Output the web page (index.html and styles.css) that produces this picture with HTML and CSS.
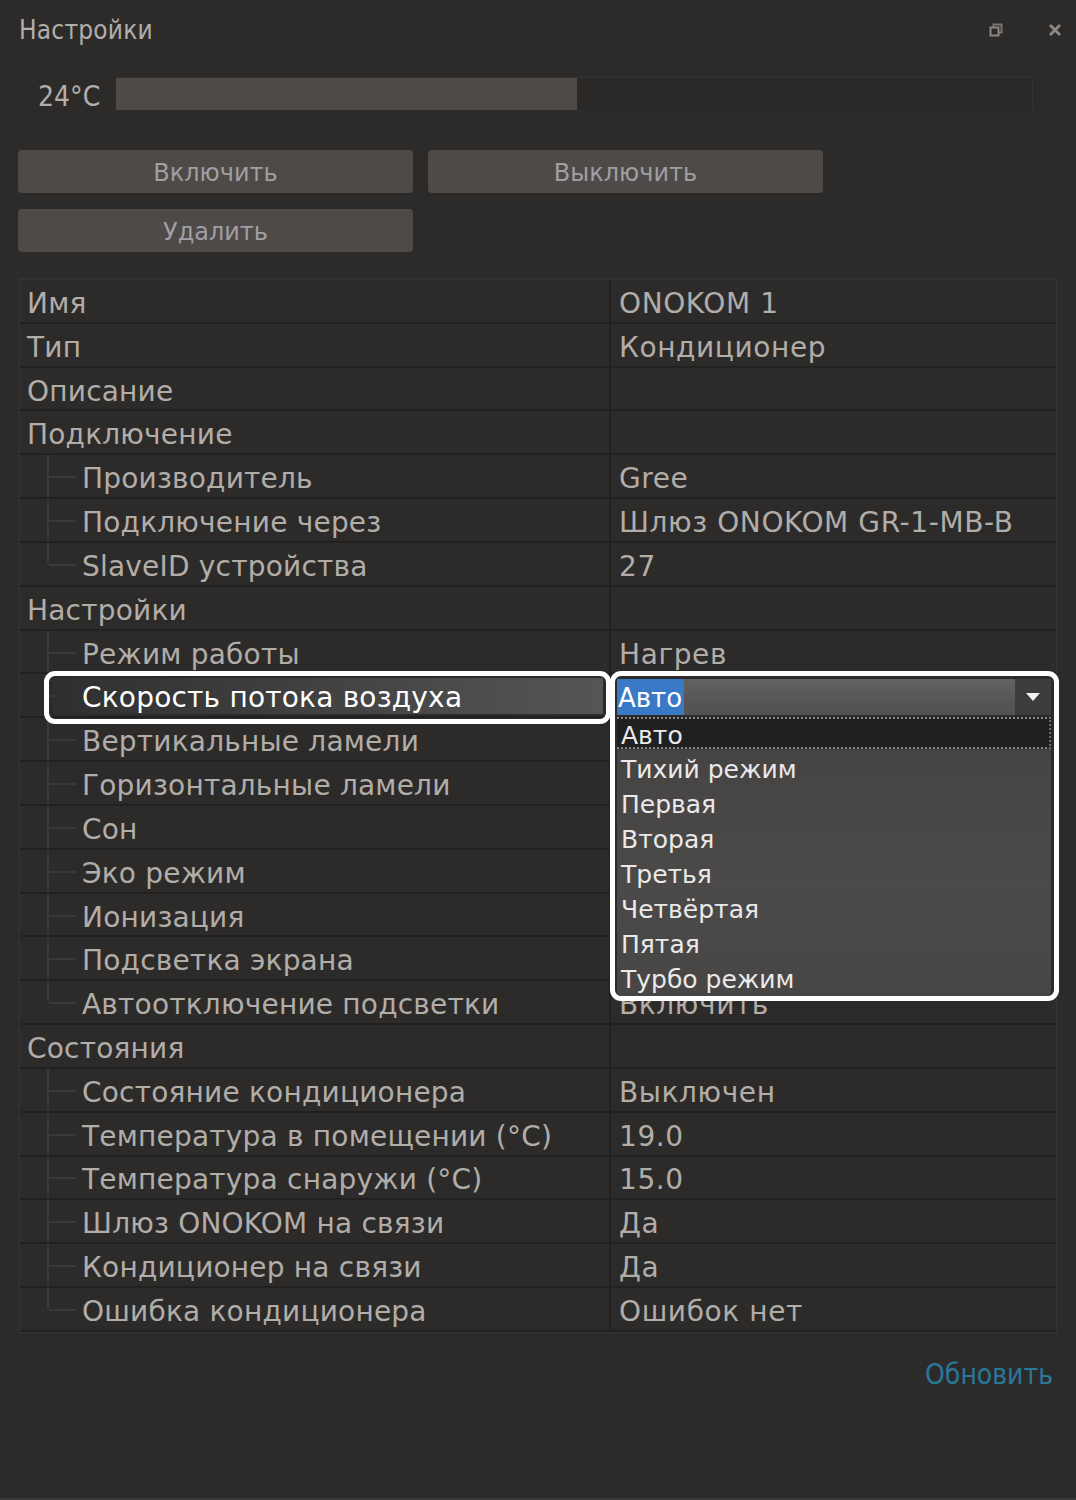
FILE: index.html
```html
<!DOCTYPE html>
<html lang="ru">
<head>
<meta charset="utf-8">
<title>Настройки</title>
<link rel="stylesheet" href="styles.css">
</head>
<body>
<div class="panel">
  <header class="titlebar">
    <span class="title">Настройки</span>
    <div class="win-icons">
      <svg class="ico-restore" width="14" height="14" viewBox="0 0 14 14">
        <rect x="4.5" y="1.5" width="8" height="8" fill="none" stroke="#7a7674" stroke-width="2"/>
        <rect x="1.5" y="4.5" width="8" height="8" fill="#2d2b29" stroke="#8a8684" stroke-width="2"/>
      </svg>
      <svg class="ico-close" width="14" height="14" viewBox="0 0 14 14">
        <path d="M2 2 L12 12 M12 2 L2 12" stroke="#8e8a88" stroke-width="2.8"/>
      </svg>
    </div>
  </header>

  <div class="temp-row">
    <span class="temp-label">24°C</span>
    <div class="bar"><div class="bar-fill" style="width:50.3%"></div></div>
  </div>

  <div class="buttons">
    <button class="btn">Включить</button>
    <button class="btn">Выключить</button>
    <button class="btn">Удалить</button>
  </div>

  <div class="table">
    <div class="row"><div class="cell key">Имя</div><div class="cell val">ONOKOM 1</div></div>
    <div class="row"><div class="cell key">Тип</div><div class="cell val">Кондиционер</div></div>
    <div class="row"><div class="cell key">Описание</div><div class="cell val"></div></div>
    <div class="row"><div class="cell key">Подключение</div><div class="cell val"></div></div>
    <div class="row"><div class="cell key child">Производитель</div><div class="cell val">Gree</div></div>
    <div class="row"><div class="cell key child">Подключение через</div><div class="cell val">Шлюз ONOKOM GR-1-MB-B</div></div>
    <div class="row"><div class="cell key child last">SlaveID устройства</div><div class="cell val">27</div></div>
    <div class="row"><div class="cell key">Настройки</div><div class="cell val"></div></div>
    <div class="row"><div class="cell key child">Режим работы</div><div class="cell val">Нагрев</div></div>
    <div class="row"><div class="cell key child"><span class="sel-label">Скорость потока воздуха</span></div><div class="cell val"></div></div>
    <div class="row"><div class="cell key child">Вертикальные ламели</div><div class="cell val"></div></div>
    <div class="row"><div class="cell key child">Горизонтальные ламели</div><div class="cell val"></div></div>
    <div class="row"><div class="cell key child">Сон</div><div class="cell val"></div></div>
    <div class="row"><div class="cell key child">Эко режим</div><div class="cell val"></div></div>
    <div class="row"><div class="cell key child">Ионизация</div><div class="cell val"></div></div>
    <div class="row"><div class="cell key child">Подсветка экрана</div><div class="cell val"></div></div>
    <div class="row"><div class="cell key child last">Автоотключение подсветки</div><div class="cell val"><span class="hidden-top">Включить</span></div></div>
    <div class="row"><div class="cell key">Состояния</div><div class="cell val"></div></div>
    <div class="row"><div class="cell key child">Состояние кондиционера</div><div class="cell val">Выключен</div></div>
    <div class="row"><div class="cell key child">Температура в помещении (°C)</div><div class="cell val">19.0</div></div>
    <div class="row"><div class="cell key child">Температура снаружи (°C)</div><div class="cell val">15.0</div></div>
    <div class="row"><div class="cell key child">Шлюз ONOKOM на связи</div><div class="cell val">Да</div></div>
    <div class="row"><div class="cell key child">Кондиционер на связи</div><div class="cell val">Да</div></div>
    <div class="row"><div class="cell key child last">Ошибка кондиционера</div><div class="cell val">Ошибок нет</div></div>

    <div class="frame frame-left"></div>
    <div class="frame frame-right">
      <div class="combo">
        <span class="combo-text"><span class="combo-sel">Авто</span></span>
        <span class="combo-arrow"><svg width="16" height="10" viewBox="0 0 16 10"><path d="M1 1 H15 L8 9 Z" fill="#f2f2f2"/></svg></span>
      </div>
      <ul class="list">
        <li class="item current">Авто</li>
        <li class="item">Тихий режим</li>
        <li class="item">Первая</li>
        <li class="item">Вторая</li>
        <li class="item">Третья</li>
        <li class="item">Четвёртая</li>
        <li class="item">Пятая</li>
        <li class="item">Турбо режим</li>
      </ul>
    </div>
  </div>

  <div class="footer">
    <a class="refresh">Обновить</a>
  </div>
</div>
</body>
</html>
```

FILE: styles.css
```css
html, body {
  margin: 0;
  padding: 0;
  background: #2d2b29;
}
body {
  width: 1076px;
  height: 1500px;
  overflow: hidden;
  font-family: "DejaVu Sans", Verdana, sans-serif;
  color: #b1ada9;
}
.panel {
  height: 1500px;
  box-sizing: border-box;
  border-bottom: 2px solid #3a3836;
  display: flex;
  flex-direction: column;
}
.titlebar {
  height: 60px;
  display: flex;
  align-items: center;
  justify-content: space-between;
  padding: 0 14px 0 19px;
}
.title {
  font-family: "Liberation Sans Narrow", "DejaVu Sans Condensed", sans-serif;
  font-size: 26px;
  color: #b2aeab;
  letter-spacing: 0.2px;
}
.win-icons {
  display: flex;
  align-items: center;
  gap: 45px;
}
.temp-row {
  display: flex;
  align-items: center;
  margin-top: 17px;
  height: 33px;
  padding-left: 38px;
  padding-right: 43px;
}
.temp-label {
  font-family: "Liberation Sans Narrow", "DejaVu Sans Condensed", sans-serif;
  font-size: 28px;
  color: #b2aeab;
  width: 78px;
  padding-top: 5px;
}
.bar {
  flex: 1;
  height: 33px;
  box-sizing: border-box;
  border-top: 1px solid #353331;
  border-right: 1px solid #353331;
  background: #2b2927;
}
.bar-fill {
  height: 100%;
  background: #4d4a47;
}
.buttons {
  margin-top: 40px;
  margin-left: 18px;
  display: grid;
  grid-template-columns: 395px 395px;
  column-gap: 15px;
  row-gap: 16px;
}
.btn {
  height: 43px;
  border: none;
  border-radius: 4px;
  background: #4d4a47;
  color: #a19ea4;
  font-family: "DejaVu Sans", Verdana, sans-serif;
  font-size: 24px;
  padding: 3px 0 0 0;
}
.table {
  position: relative;
  margin: 26px 0 0 19px;
  width: 1038px;
  box-sizing: border-box;
  border: 1px solid #363432;
  border-top: 2px solid #343230;
  background: #2d2b29;
}
.row {
  display: grid;
  grid-template-columns: 591px 1fr;
  height: 43.83px;
  box-sizing: border-box;
  border-bottom: 2px solid #222120;
}
.row:last-of-type { border-bottom: none; }
.cell {
  display: flex;
  align-items: center;
  font-size: 28px;
  letter-spacing: 0.2px;
  white-space: nowrap;
  overflow: hidden;
  color: #b1ada9;
  padding-top: 5px;
  box-sizing: border-box;
}
.val {
  padding-left: 8px;
  letter-spacing: 0.6px;
}
.key {
  position: relative;
  padding-left: 7px;
  border-right: 2px solid #222120;
}
.key.child {
  padding-left: 62px;
}
.key.child::before {
  content: "";
  position: absolute;
  left: 27px;
  top: -2px;
  bottom: -2px;
  width: 2px;
  background: #3b3937;
}
.key.child.last::before {
  bottom: 50%;
}
.key.child::after {
  content: "";
  position: absolute;
  left: 29px;
  top: 50%;
  width: 27px;
  height: 2px;
  background: #3b3937;
}
.hidden-top {
  display: inline-block;
}
.sel-label {
  position: absolute;
  left: 33px;
  right: 6px;
  top: 4px;
  bottom: 2px;
  padding-left: 29px;
  padding-top: 2px;
  display: flex;
  align-items: center;
  color: #ffffff;
  background: linear-gradient(to right, #2f2f2f, #4a4a4a 70%, #555 100%);
  z-index: 2;
}
.frame {
  position: absolute;
  box-sizing: border-box;
  border: 5px solid #ffffff;
  border-radius: 11px;
  z-index: 3;
}
.frame-left {
  left: 24px;
  top: 391px;
  width: 567px;
  height: 53px;
}
.frame-right {
  left: 590px;
  top: 391px;
  width: 449px;
  height: 330px;
  padding: 3px 3px 0 2px;
  background: #2d2b29;
  display: flex;
  flex-direction: column;
  overflow: hidden;
}
.combo {
  height: 36px;
  display: flex;
  background: linear-gradient(to bottom, #646260, #5a5856 50%, #525050);
  flex-shrink: 0;
}
.combo-text {
  flex: 1;
  display: flex;
  align-items: center;
}
.combo-sel {
  background: #3a79c6;
  color: #ffffff;
  font-size: 26px;
  height: 36px;
  line-height: 38px;
  padding: 0 2px 0 1px;
}
.combo-arrow {
  width: 36px;
  background: #3f3d3c;
  display: flex;
  align-items: center;
  justify-content: center;
}
.list {
  list-style: none;
  margin: 2px 0 0 0;
  padding: 0;
  flex: 1;
  background: linear-gradient(to bottom, #444342, #4b4a49 60%, #474645);
  border-radius: 0 0 6px 6px;
}
.item {
  height: 35px;
  line-height: 36px;
  padding-left: 4px;
  font-size: 25px;
  color: #ebe9ea;
}
.item.current {
  height: 32px;
  line-height: 33px;
  background: #202020;
  box-sizing: border-box;
  border-top: 2px dotted #8a8a8a;
  border-bottom: 2px dotted #8a8a8a;
  border-right: 2px dotted #6a6a6a;
  margin-bottom: 3px;
}
.footer {
  display: flex;
  justify-content: flex-end;
  padding: 25px 23px 0 0;
}
.refresh {
  font-family: "Liberation Sans Narrow", "DejaVu Sans Condensed", sans-serif;
  font-size: 28px;
  color: #2a7898;
}
```
